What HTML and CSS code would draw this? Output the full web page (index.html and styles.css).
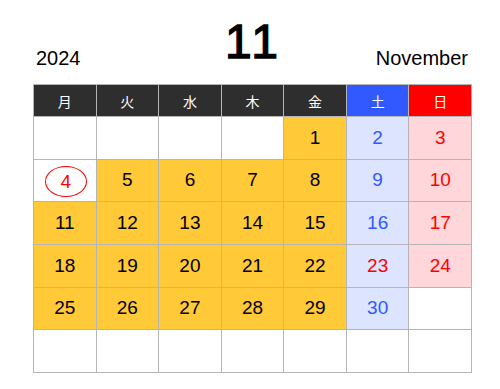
FILE: index.html
```html
<!DOCTYPE html>
<html lang="ja">
<head>
<meta charset="utf-8">
<title>2024年11月 カレンダー</title>
<link rel="stylesheet" href="styles.css">
</head>
<body>
<div class="calendar">
  <div class="head">
    <div class="year">2024</div>
    <div class="month">11</div>
    <div class="month-name">November</div>
  </div>
  <div class="grid">
    <div class="wd">月</div>
    <div class="wd">火</div>
    <div class="wd">水</div>
    <div class="wd">木</div>
    <div class="wd">金</div>
    <div class="wd sat">土</div>
    <div class="wd sun">日</div>

    <div class="d"></div>
    <div class="d"></div>
    <div class="d"></div>
    <div class="d"></div>
    <div class="d work">1</div>
    <div class="d satd">2</div>
    <div class="d sund">3</div>

    <div class="d today"><span class="ring">4</span></div>
    <div class="d work">5</div>
    <div class="d work">6</div>
    <div class="d work">7</div>
    <div class="d work">8</div>
    <div class="d satd">9</div>
    <div class="d sund">10</div>

    <div class="d work">11</div>
    <div class="d work">12</div>
    <div class="d work">13</div>
    <div class="d work">14</div>
    <div class="d work">15</div>
    <div class="d satd">16</div>
    <div class="d sund">17</div>

    <div class="d work">18</div>
    <div class="d work">19</div>
    <div class="d work">20</div>
    <div class="d work">21</div>
    <div class="d work">22</div>
    <div class="d satd holiday">23</div>
    <div class="d sund">24</div>

    <div class="d work">25</div>
    <div class="d work">26</div>
    <div class="d work">27</div>
    <div class="d work">28</div>
    <div class="d work">29</div>
    <div class="d satd">30</div>
    <div class="d"></div>

    <div class="d"></div>
    <div class="d"></div>
    <div class="d"></div>
    <div class="d"></div>
    <div class="d"></div>
    <div class="d"></div>
    <div class="d"></div>
  </div>
</div>
</body>
</html>
```

FILE: styles.css
```css
html, body {
  margin: 0;
  padding: 0;
  background: #ffffff;
}

body {
  font-family: "Liberation Sans", Arial, "Noto Sans CJK JP", sans-serif;
  color: #000000;
}

.calendar {
  width: 439px;
  margin-left: 33px;
  padding-top: 18px;
}

.head {
  display: flex;
  justify-content: space-between;
  align-items: flex-end;
  padding: 0 4px 0 3px;
  margin-bottom: 16px;
}

.year,
.month-name {
  font-size: 20px;
  line-height: 1;
  width: 110px;
}

.month-name {
  text-align: right;
}

.month {
  font-size: 48px;
  -webkit-text-stroke: 1.4px #000000;
  letter-spacing: 3px;
  line-height: 1;
  padding: 0 0 2px 2px;
  text-align: center;
}

.grid {
  display: grid;
  grid-template-columns: repeat(7, 1fr);
  grid-template-rows: 31px repeat(6, 41.67px);
  gap: 1px;
  background: #b5b5b5;
  border: 1px solid #b5b5b5;
}

.wd {
  background: #2e2e2e;
  color: #ffffff;
  font-family: "Noto Sans CJK JP", sans-serif;
  font-size: 14px;
  display: flex;
  align-items: center;
  justify-content: center;
}

.wd.sat {
  background: #3159ff;
}

.wd.sun {
  background: #ff0000;
}

.d {
  background: #ffffff;
  font-size: 19px;
  display: flex;
  align-items: center;
  justify-content: center;
}

.d.work {
  background: #ffc937;
}

.d.satd {
  background: #dce4ff;
  color: #3159ff;
}

.d.sund {
  background: #ffd6d9;
  color: #ff0000;
}

.d.holiday {
  color: #ff0000;
}

.d.today {
  color: #ff0000;
}

.ring {
  display: flex;
  align-items: center;
  justify-content: center;
  width: 40px;
  height: 29px;
  border: 1px solid #ff0000;
  border-radius: 50%;
  margin: 3px 0 0 2px;
}
```
